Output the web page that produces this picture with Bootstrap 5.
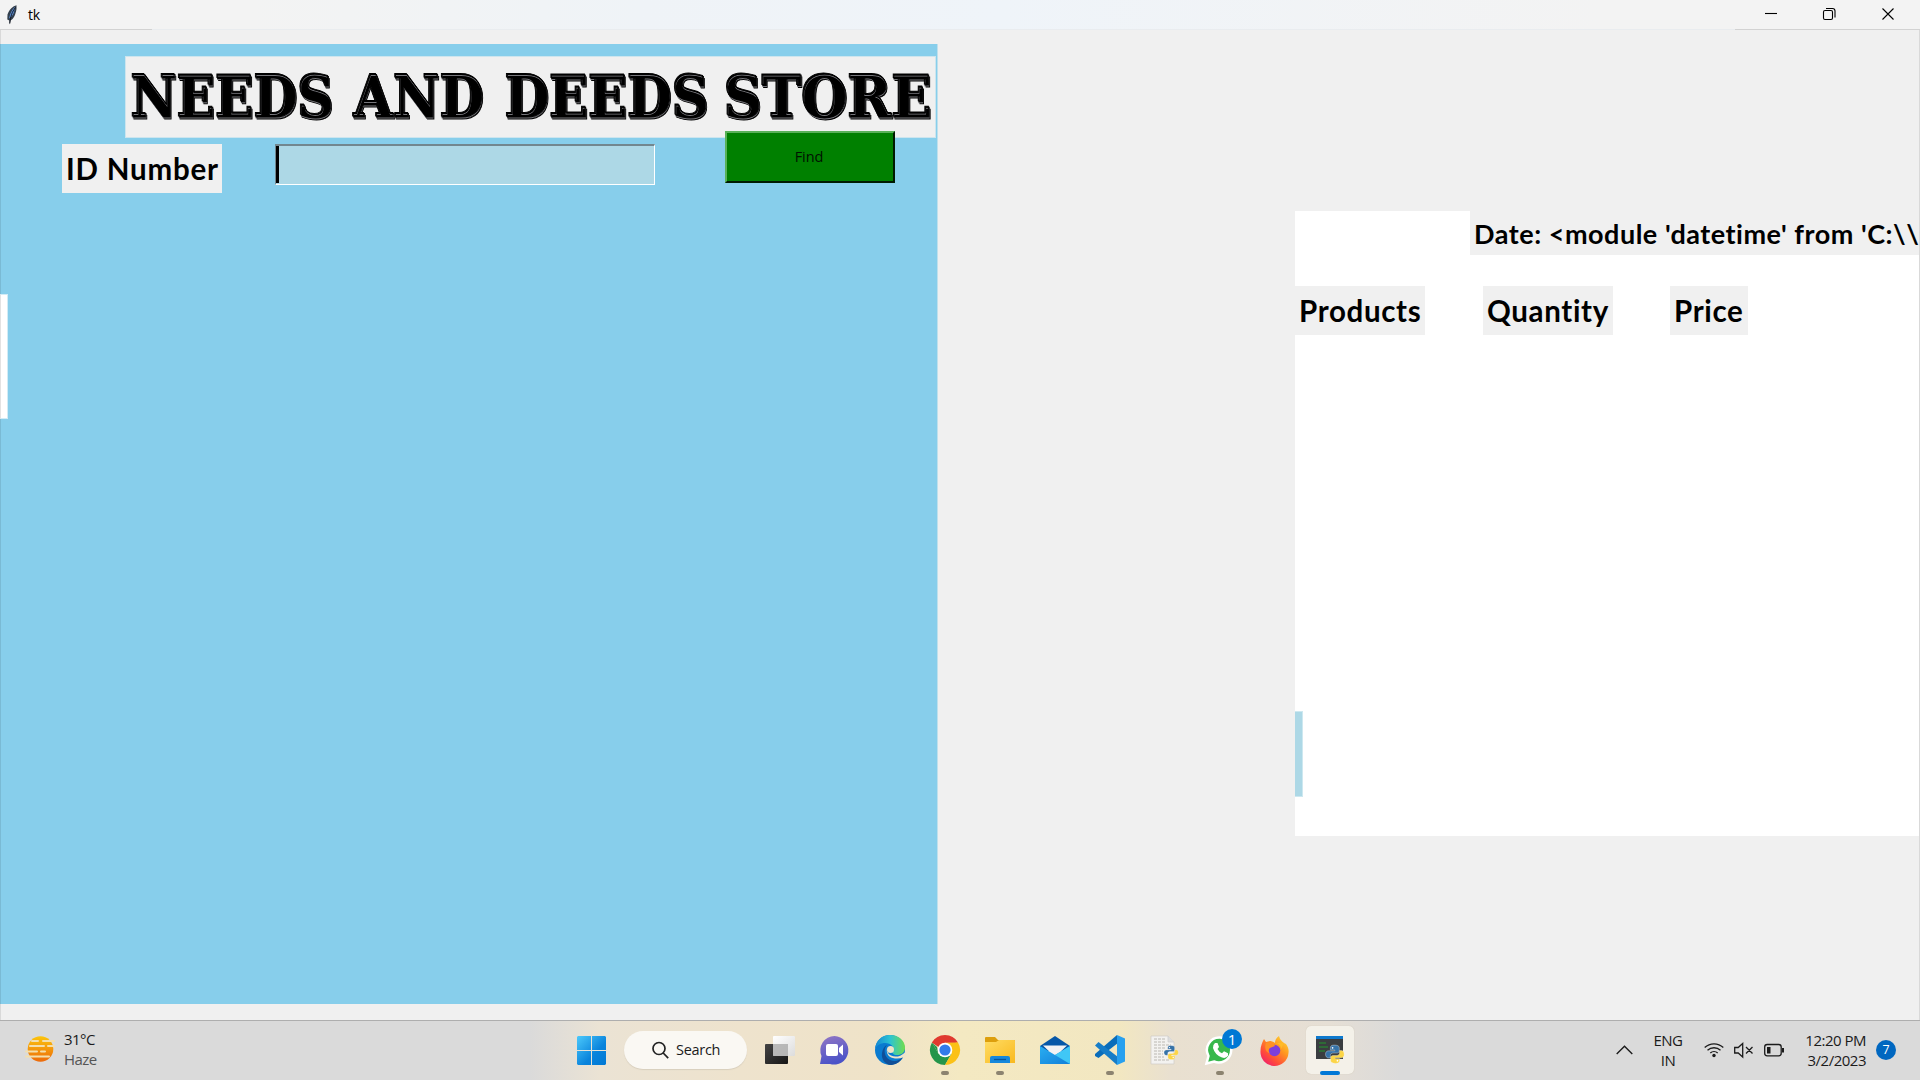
<!DOCTYPE html>
<html lang="en">
<head>
<meta charset="utf-8">
<title>tk</title>
<link href="https://cdn.jsdelivr.net/npm/bootstrap@5.3.0/dist/css/bootstrap.min.css" rel="stylesheet">
<style>
  body { width: 1920px; height: 1080px; background: #f0f0f0; color: #000; font-family: "Open Sans", "Noto Sans", sans-serif; }
  svg { display: block; overflow: visible; flex: none; }
  .tk-title { height: 29px; font-size: 14px; background: linear-gradient(90deg, #f3f3f3 0, #f3f3f3 250px, #eff3f7 640px, #eff4f9 1000px, #f3f3f3 1600px); }
  .tk-title .feather { margin-left: 6px; }
  .tk-title .caption { letter-spacing: -.3px; line-height: 29px; margin-left: 10px; }
  .title-rule { height: 1px; background: linear-gradient(90deg, #d2d2d2 152px, #e9ecef 152px, #e9ecef 1735px, #d2d2d2 1735px); }
  .tk-client { height: 990px; border: solid #d9d9d9; border-width: 0 1px; }
  .pane-left { width: 938px; height: 960px; margin: 14px 0 0 -1px; background: #87ceeb; border-left: 1px solid #7abad4; border-right: 1px solid #bfe0ec; }
  .store-name { width: 811px; height: 82px; margin: 12px 0 0 124px; background: #f0f0f0; border: 1px solid #cde5ee; }
  .store-name text { font-family: "DejaVu Serif", serif; font-weight: 700; font-size: 57px; text-shadow: 1px 1px 0 #000, 1px 2px 0 #77777c, 2px 3px 0 #000; stroke: #000; stroke-width: 1px; }
  .tk-label { background: #f0f0f0; font-family: Lato, sans-serif; font-weight: 700; font-size: 29.5px; letter-spacing: .65px; line-height: 49px; height: 49px; white-space: nowrap; padding-left: 4px; overflow: hidden; }
  .lbl-id { width: 160px; margin: 6px 0 0 61px; letter-spacing: .8px; }
  .entry { width: 380px; height: 41px; margin: 6px 0 0 53px; background: #add8e6; border: 1px solid; border-top-width: 2px; border-color: #72878f #fff #fff #72878f; }
  .entry .caret { width: 3px; height: 37px; background: #000; }
  .find-btn { width: 170px; height: 52px; margin: -7px 0 0 70px; background: #008000; border: 2px solid; border-color: #59b159 #001a00 #001a00 #59b159; border-radius: 0; font-size: 14.5px; color: #001200; letter-spacing: -.1px; padding: 0 2px 0 0; z-index: 1; }
  .side-strip { width: 8px; height: 125px; background: #fff; margin: 101px 0 0 -1px; border: 1px solid #d2ecf6; border-left-color: #e2e2e2; }
  .pane-right { width: 624px; height: 625px; margin: 181px 0 0 357px; background: #fff; overflow: hidden; }
  .lbl-date { height: 44px; line-height: 46px; margin-left: 175px; font-size: 27px; letter-spacing: .52px; }
  .col-heads { margin-top: 31px; }
  .strip-blue { width: 8px; height: 86px; background: #add8e6; border: 1px solid #cde8f0; border-left: 0; margin-top: 376px; }
  .taskbar { height: 60px; font-size: 14px; line-height: 20px; color: #1b1b1b; border-top: 1px solid #aeaeae; padding-bottom: 1px;
    background: linear-gradient(90deg, #dadada 0, #dadada 530px, #ebe3d4 600px, #eee3cd 740px, #efe3c8 880px, #f4e9c2 960px, #f2e7c1 1120px, #e9e0d0 1170px, #e6dfd5 1330px, #dadada 1400px); }
  .weather { width: 577px; padding-left: 25px; }
  .weather svg { margin-top: -3px; }
  .weather-text { letter-spacing: -.55px; font-size: 15px; margin: -3px 0 0 8px; }
  .search-pill { width: 123px; height: 38px; margin: 0 5px 0 18px; background: #faf8f3; border-radius: 19px; box-shadow: 0 1px 1px #d8cfbd; padding-left: 28px; font-size: 14.5px; letter-spacing: -.3px; }
  .slot { width: 55px; height: 58px; }
  .dot, .dot-on { left: 50%; transform: translateX(-50%); bottom: 4px; width: 8px; height: 4px; border-radius: 2px; background: #8c8370; }
  .dot-on { width: 20px; background: #0078d7; }
  .count { left: 30px; top: 8px; width: 20px; height: 20px; border-radius: 50%; background: #0078d4; color: #fff; font-size: 15px; line-height: 20px; }
  .tile { width: 48px; height: 48px; background: #f4f1e9; border-radius: 5px; box-shadow: 0 0 1px #c5bda9; }
  .tray-text { letter-spacing: -.5px; font-size: 15px; }
  .lang { width: 40px; margin-left: 15px; }
  .clock { width: 70px; margin-left: 12px; margin-right: 10px; }
  .bell { width: 20px; height: 20px; border-radius: 50%; background: #0067c0; color: #fff; font-size: 12.5px; line-height: 20px; margin-right: 24px; }
</style>
</head>
<body class="overflow-hidden d-flex flex-column m-0">

<header class="tk-title d-flex align-items-center">
  <svg class="feather" width="12" height="20" viewBox="0 0 12 20">
    <path d="M10.500 .3C7 1 3.200 4.500 1.500 9.500L1.300 14.500 3.300 15.500 3.500 19.500 4.500 15.500C7.500 14 9.500 10 10.500 4z" fill="#333f4d"/>
    <path d="M9 2C6.500 4 4 8 3 13.500 6 12 8.500 8 9 2z" fill="#5b8fd8"/>
    <path d="M9.500 2.500C6 7 4.500 11 3.800 18.500" fill="none" stroke="#10141c" stroke-width="1"/>
  </svg>
  <span class="caption me-auto">tk</span>
  <svg width="155" height="29" viewBox="0 0 155 29" fill="none" stroke="#000" stroke-width="1.100">
    <path d="M0 13.500h12"/>
    <rect x="58.500" y="10.500" width="9" height="9" rx="1.500"/><path d="M61 8.500h6.500q2.500 0 2.500 2.500v6.500"/>
    <path d="M117.500 8.500l11 11M128.500 8.500l-11 11"/>
  </svg>
</header>
<div class="title-rule"></div>

<main class="tk-client d-flex align-items-start">
  <section class="pane-left">
    <h1 class="store-name mb-0">
      <svg width="809" height="80" viewBox="0 0 809 80">
        <text x="4" y="59" textLength="203" lengthAdjust="spacingAndGlyphs">NEEDS</text>
        <text x="227" y="59" textLength="130" lengthAdjust="spacingAndGlyphs">AND</text>
        <text x="378" y="59" textLength="204" lengthAdjust="spacingAndGlyphs">DEEDS</text>
        <text x="597" y="59" textLength="208" lengthAdjust="spacingAndGlyphs">STORE</text>
      </svg>
    </h1>
    <div class="d-flex align-items-start">
      <label class="tk-label lbl-id">ID Number</label>
      <div class="entry"><div class="caret"></div></div>
      <button class="btn find-btn position-relative" type="button">Find</button>
    </div>
    <div class="side-strip"></div>
  </section>

  <section class="pane-right">
    <div class="tk-label lbl-date">Date: &lt;module 'datetime' from 'C:\\</div>
    <div class="col-heads d-flex">
      <div class="tk-label" style="width:130px">Products</div>
      <div class="tk-label" style="width:130px;margin-left:58px">Quantity</div>
      <div class="tk-label" style="width:78px;margin-left:57px">Price</div>
    </div>
    <div class="strip-blue"></div>
  </section>
</main>

<footer class="taskbar d-flex align-items-center">
  <div class="weather d-flex align-items-center">
    <svg width="31" height="28" viewBox="0 0 31 28">
      <defs><linearGradient id="sun" x2="0" y2="1"><stop stop-color="#fcc50c"/><stop offset="1" stop-color="#ec6a0c"/></linearGradient></defs>
      <circle cx="15.500" cy="14" r="12.800" fill="url(#sun)"/>
      <g stroke="#f3dfae" stroke-width="2" stroke-linecap="round"><path d="M7 6h6M18 6h11M5 11h14M23 11h6M1 16.500h11M16 16.500h4M1 21.500h23"/></g>
    </svg>
    <div class="weather-text">31°C<br><span style="color:#555">Haze</span></div>
  </div>

  <svg width="29" height="29" viewBox="0 0 29 29">
    <defs><linearGradient id="win" gradientUnits="userSpaceOnUse" x1="0" y1="0" x2="29" y2="29"><stop stop-color="#4cc9fb"/><stop offset=".6" stop-color="#0a84dc"/><stop offset="1" stop-color="#0078d4"/></linearGradient></defs>
    <path fill="url(#win)" d="M1 0h13v14H0V1zM15 0h13l1 1v13H15zM0 15h14v14H1l-1-1zM15 15h14v13l-1 1H15z"/>
  </svg>
  <div class="search-pill d-flex align-items-center">
    <svg width="17" height="17" viewBox="0 0 17 17" fill="none" stroke="#222" stroke-width="1.700"><circle cx="7" cy="6.500" r="6"/><path d="M11.200 11l5 5.200"/></svg>
    <span style="margin-left:7px">Search</span>
  </div>

  <div class="slot d-flex align-items-center justify-content-center">
    <svg width="30" height="30" viewBox="0 0 30 30">
      <defs><linearGradient id="tv" x2="1" y2="1"><stop stop-color="#444"/><stop offset="1" stop-color="#161616"/></linearGradient>
      <linearGradient id="tw" x2="1" y2="1"><stop stop-color="#fff"/><stop offset="1" stop-color="#dcdcdc"/></linearGradient></defs>
      <rect y="9" width="23" height="20" rx="1" fill="url(#tv)"/><rect x="8" y="1" width="22" height="20" rx="1" fill="url(#tw)"/><path d="M8 9h15v12H8z" fill="#aaa" opacity=".8"/>
    </svg>
  </div>
  <div class="slot d-flex align-items-center justify-content-center">
    <svg width="29" height="29" viewBox="0 0 29 29">
      <defs><linearGradient id="chat" x2=".3" y2="1"><stop stop-color="#9377c4"/><stop offset="1" stop-color="#4b53c8"/></linearGradient></defs>
      <path fill="url(#chat)" d="M14.500 0A14.300 14.300 0 1 1 10 28L0 28 1.500 20A14.300 14.300 0 0 1 14.500 0z"/>
      <rect x="6" y="8" width="12" height="12" rx="2" fill="#fff"/><path d="M19 12l4-3.500v11L19 16z" fill="#fff"/>
    </svg>
  </div>
  <div class="slot d-flex align-items-center justify-content-center">
    <svg width="30" height="30" viewBox="0 0 30 30">
      <defs><linearGradient id="e1" x2="1"><stop stop-color="#1486d4"/><stop offset=".5" stop-color="#2cc3d3"/><stop offset="1" stop-color="#70dd4d"/></linearGradient></defs>
      <circle cx="15" cy="15" r="15" fill="#0a7bd0"/>
      <path d="M0 14C1 5 7 0 15 0c9 0 15 6 15 12.500 0 5-3.500 7.500-8 7.500-4 0-5-2-4-3.500C20 12 16 8 10 8 6 8 2 10 0 14z" fill="url(#e1)"/>
      <path d="M12 10c-4 4-3 12 3 15 5 2.500 10 0 13-3-3 5.500-8 8-13 8-5-1-9-6-8-12 .5-4 2.500-7 5-8z" fill="#104f98"/>
      <path d="M13 11.500c-2 3-1 7 3 9s9 1.500 14-3l2 2-2 4-2-1c-4 1.500-10 1.500-13.500-1-3-2.500-3.500-7-1.500-10z" fill="#efe3c8"/><circle cx="15.500" cy="14.500" r="3.500" fill="#efe3c8"/>
    </svg>
  </div>
  <div class="slot position-relative d-flex align-items-center justify-content-center">
    <svg width="30" height="30" viewBox="0 0 30 30">
      <path d="M15 15L2 7.500A15 15 0 0 1 28 7.500H15z" fill="#e03a2f"/>
      <path d="M2 7.500A15 15 0 0 0 15 30l6.500-11.300L15 15 8.500 18.700z" fill="#24954a"/>
      <path d="M28 7.500A15 15 0 0 1 15 30l6.500-11.300V7.500z" fill="#fbc116"/>
      <path d="M15 7.500h13L21 13z" fill="#fbc116"/><path d="M2 7.500L5 4l23 3.500H15L8.500 12z" fill="#e03a2f"/>
      <path d="M2 7.500l6.500 11.200L7 12z" fill="#24954a"/>
      <circle cx="15" cy="15" r="7.300" fill="#fff"/><circle cx="15" cy="15" r="5.600" fill="#327bea"/>
    </svg>
    <span class="dot position-absolute"></span>
  </div>
  <div class="slot position-relative d-flex align-items-center justify-content-center">
    <svg width="30" height="28" viewBox="0 0 30 28">
      <defs><linearGradient id="fo" x2="1" y2="1"><stop stop-color="#ffdc63"/><stop offset="1" stop-color="#f9b91e"/></linearGradient></defs>
      <path d="M0 2q0-1 1-1h9l3 3h16q1 0 1 1v5H0z" fill="#dd9f0d"/><path d="M0 6h11l3-2h15q1 0 1 1v22H0z" fill="url(#fo)"/>
      <path d="M5 27v-5q0-2 2-2h16q2 0 2 2v5z" fill="#1688dc"/><path d="M9 23.500h12" stroke="#07569d" stroke-width="1.300"/>
    </svg>
    <span class="dot position-absolute"></span>
  </div>
  <div class="slot d-flex align-items-center justify-content-center">
    <svg width="30" height="28" viewBox="0 0 30 28">
      <defs><linearGradient id="ml" x2="1" y2="1"><stop stop-color="#29aef1"/><stop offset="1" stop-color="#127fd9"/></linearGradient></defs>
      <path d="M0 10L15 0l15 10v5H0z" fill="#0657a8"/><path d="M3 9.500h24L15 21z" fill="#f2f2f4"/>
      <path d="M0 10l15 9L30 10v18H0z" fill="url(#ml)"/><path d="M15 19l15-9v18z" fill="#40c7f6"/>
    </svg>
  </div>
  <div class="slot position-relative d-flex align-items-center justify-content-center">
    <svg width="30" height="30" viewBox="0 0 30 30">
      <path d="M22 0v8.700L3.500 23 0 21v-2z" fill="#0a6dba"/><path d="M0 10.500L3.500 7 22 21.300V30z" fill="#167dc8"/>
      <path d="M22 0l8 3.500v23L22 30z" fill="#27a0ef"/>
    </svg>
    <span class="dot position-absolute"></span>
  </div>
  <div class="slot d-flex align-items-center justify-content-center">
    <svg width="29" height="30" viewBox="0 0 29 30">
      <path d="M1 1h17l6 6v22H1z" fill="#f3f2f0" stroke="#d0ccc5" stroke-width=".7"/><path d="M18 1v6h6" fill="#ddd" stroke="#ccc" stroke-width=".7"/>
      <path d="M4 4h11M4 7h12M4 10h17M4 13h11M4 16h9M4 19h9M4 22h10M4 25h15" stroke="#bbb8b1" stroke-width="1.200" stroke-dasharray="3 1"/>
      <g transform="translate(14 10) scale(.94)"><use href="#py"/></g>
    </svg>
  </div>
  <div class="slot position-relative d-flex align-items-center justify-content-center">
    <svg width="30" height="30" viewBox="0 0 30 30">
      <path d="M15 2.500A12.500 12.500 0 1 1 9 26.500L1.500 28.500 3.500 21A12.500 12.500 0 0 1 15 2.500z" fill="#37b84c" stroke="#fff" stroke-width="2.500"/>
      <path d="M10 8l2.500 0 1.500 4-1.500 2q1.500 3 4.500 4.300l2-2 4 2v2.500q-2 3-6 1.800Q10 20 8 13 7.500 10 10 8z" fill="#fff"/>
    </svg>
    <span class="count position-absolute text-center">1</span>
    <span class="dot position-absolute"></span>
  </div>
  <div class="slot d-flex align-items-center justify-content-center">
    <svg width="29" height="29" viewBox="0 0 29 29">
      <defs><linearGradient id="ff" x1="1" x2=".2" y2="1"><stop stop-color="#ffe43c"/><stop offset=".4" stop-color="#ff9a1f"/><stop offset=".75" stop-color="#ff4b3a"/><stop offset="1" stop-color="#ee1d70"/></linearGradient></defs>
      <path d="M4 3l2 3 4-1c2 0 4 1 5 2 0-3 1-5 4-7 1 4 3 5 5 7l2 1c2 3 3 5 2.500 9A14 14 0 0 1 .5 15C.5 10 2 7 4 3z" fill="url(#ff)"/>
      <circle cx="14.500" cy="14.500" r="5.800" fill="#7d3fdc"/><path d="M6 7c4-2 8 0 9 3l-4 1.500c-3 1-3 4-1 6-4-1-6-5-4-10.500z" fill="#ff9026"/><path d="M15 7c4 0 6 3 6 6l3-6z" fill="#ffbb27"/>
    </svg>
  </div>
  <div class="slot position-relative d-flex align-items-center justify-content-center">
    <div class="tile d-flex align-items-center justify-content-center">
      <svg width="28" height="28" viewBox="0 0 28 28">
        <path d="M0 0h27v23H0z" fill="#3a3d40"/><path d="M0 0h27v3H0z" fill="#0e79cd"/><path d="M3 7h7M3 11h9M3 15h6" stroke="#2b7a33" stroke-width="1.300"/>
        <g transform="translate(9.500 8.500) scale(1.220)">
          <g id="py">
            <path d="M7 .5C4.500.5 4 1.500 4 3v1.500h3.600v.7H2.500C1 5.200 0 6.300 0 8s1 3 2.300 3H4V9c0-1.200 1-2 2.200-2h3.300c1 0 1.800-.8 1.800-1.800V3c0-1.600-1-2.500-4.300-2.500z" fill="#3672a8" stroke="#f3f1ec" stroke-width=".3"/>
            <path d="M8.300 15.500c2.600 0 3.300-1 3.300-2.500v-1.400H8v-.7h5c1.500 0 2.300-1.200 2.300-2.900S14.500 5 13 5h-1.500v2c0 1.200-1 2-2.100 2H6c-1 0-1.800.8-1.800 1.800V13c0 1.600 1.200 2.500 4.100 2.500z" fill="#fcd546" stroke="#f3f1ec" stroke-width=".3"/>
            <circle cx="5.800" cy="2.700" r=".7" fill="#fff"/><circle cx="9.800" cy="13.300" r=".7" fill="#fff"/>
          </g>
        </g>
      </svg>
    </div>
    <span class="dot-on position-absolute"></span>
  </div>

  <svg class="ms-auto" width="17" height="10" viewBox="0 0 17 10" fill="none" stroke="#1b1b1b" stroke-width="1.400"><path d="M.7 9l7.800-7.800L16.300 9"/></svg>
  <div class="lang tray-text text-center">ENG<br>IN</div>
  <svg style="margin-left:16px" width="80" height="18" viewBox="0 0 80 18" fill="none" stroke="#1b1b1b" stroke-width="1.300">
    <path d="M.7 6.500a13.500 13.500 0 0 1 18.600 0M3.500 9.300a9.500 9.500 0 0 1 13 0M6.300 12a5.500 5.500 0 0 1 7.400 0"/><circle cx="10" cy="14.500" r="1.700" fill="#1b1b1b" stroke="none"/>
    <path d="M30.700 6.500h3.500l4.500-4v13.500l-4.500-4h-3.500zM42 6l6.500 6.500M48.500 6L42 12.500"/>
    <rect x="60.700" y="3.500" width="16.500" height="11.300" rx="2.500"/><path d="M63 6h3.500v6.500H63zM78 7h2v4.500h-2z" fill="#1b1b1b" stroke="none"/>
  </svg>
  <div class="clock tray-text text-end">12:20 PM<br>3/2/2023</div>
  <div class="bell text-center">7</div>
</footer>

<script src="https://cdn.jsdelivr.net/npm/bootstrap@5.3.0/dist/js/bootstrap.bundle.min.js"></script>
</body>
</html>
